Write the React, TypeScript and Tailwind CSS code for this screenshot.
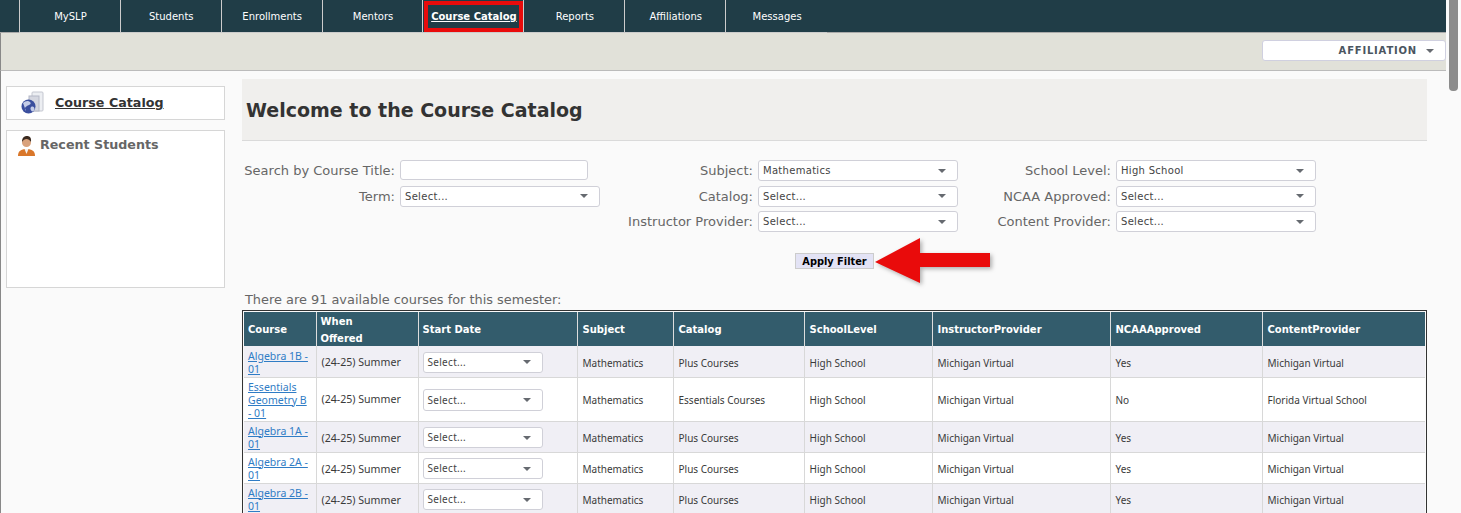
import React from 'react';

const navItems = ['MySLP', 'Students', 'Enrollments', 'Mentors', 'Course Catalog', 'Reports', 'Affiliations', 'Messages'];

const rows = [
  { course: ['Algebra 1B -', '01'], catalog: 'Plus Courses', ncaa: 'Yes', content: 'Michigan Virtual', tall: false, even: false },
  { course: ['Essentials', 'Geometry B', '- 01'], catalog: 'Essentials Courses', ncaa: 'No', content: 'Florida Virtual School', tall: true, even: true },
  { course: ['Algebra 1A -', '01'], catalog: 'Plus Courses', ncaa: 'Yes', content: 'Michigan Virtual', tall: false, even: false },
  { course: ['Algebra 2A -', '01'], catalog: 'Plus Courses', ncaa: 'Yes', content: 'Michigan Virtual', tall: false, even: true },
  { course: ['Algebra 2B -', '01'], catalog: 'Plus Courses', ncaa: 'Yes', content: 'Michigan Virtual', tall: false, even: false },
];

const Caret = () => (
  <svg width="8" height="4" viewBox="0 0 8 4" className="shrink-0">
    <path d="M0 0h8L4 4z" fill="#666a70" />
  </svg>
);

const Select = ({ value = 'Select...', className = 'w-[200px] h-[21px]' }: { value?: string; className?: string }) => (
  <div className={`flex items-center justify-between bg-white border border-[#d0d0d8] rounded-[3px] pl-1 pr-[11px] text-[10px] tracking-[0.3px] text-[#444] ${className}`}>
    <span>{value}</span>
    <Caret />
  </div>
);

const Label = ({ text }: { text: string }) => (
  <label className="text-right text-[13px] leading-[21px] text-[#666] whitespace-nowrap">{text}</label>
);

const GlobeIcon = () => (
  <svg width="24" height="26" viewBox="0 0 24 26" className="shrink-0">
    <rect x="11" y="2" width="11" height="19" rx="1" fill="#eceef2" stroke="#c4c7d0" strokeWidth="1" />
    <rect x="8" y="6" width="10" height="15" fill="#d5d7e0" stroke="#b4b8c6" strokeWidth="1" />
    <circle cx="7.500" cy="16.500" r="7" fill="#3b4f9e" />
    <path d="M2 13c2-2 5-3 7-1s-1 3-3 4-3 3-1 5M10 17c2-1 3.500 0 3.500 2s-2 3-3 2-1.500-3-.5-4z" fill="#c5cde8" />
  </svg>
);

const PersonIcon = () => (
  <svg width="17" height="20" viewBox="0 0 17 20" className="shrink-0">
    <path d="M0 20c0-5 3-7 8.500-7S17 15 17 20z" fill="#d9772a" />
    <path d="M6.500 13h4l-2 5z" fill="#f3f3f3" />
    <circle cx="8.500" cy="6.500" r="4.500" fill="#d9a27c" />
    <path d="M4 6c0-4 2-6 5-6s4.500 2 4 6c-1-2-3-3-4.500-3S5 4 4 6z" fill="#3a2a20" />
  </svg>
);

export default function App() {
  return (
    <div className="flex h-[513px] w-[1461px] overflow-hidden bg-[#fafafa] font-['DejaVu_Sans',sans-serif]">
      <div className="w-[1446px] shrink-0">
        {/* top nav */}
        <nav className="h-[33px] bg-[#203d47] border-b border-[#aaa] pl-[19px]">
          <ul className="flex w-[808px] h-[33px] border-b border-[#ccc] border-l border-l-[#ccc]">
            {navItems.map((item, i) => {
              const active = item === 'Course Catalog';
              const last = i === navItems.length - 1;
              return (
                <li key={item} className={`w-[101px] flex items-center justify-center pl-px text-[10px] text-white ${last ? '' : 'border-r border-[#ccc]'}`}>
                  {active ? (
                    <div className="w-[99px] h-[31px] mt-px border-[4px] border-[#e90b0b] flex items-center justify-center font-bold underline">{item}</div>
                  ) : (
                    item
                  )}
                </li>
              );
            })}
          </ul>
        </nav>

        {/* affiliation bar */}
        <div className="h-[38px] bg-[#e1e1d9] border-b border-[#bbb] border-l border-l-[#888] flex justify-end pt-[7px]">
          <div className="flex items-center justify-end gap-[9px] w-[184px] h-[21px] bg-white border border-[#d0d0e0] rounded-[3px] pr-[11px] text-[10px] font-bold tracking-[0.8px] text-[#4a5560]">
            AFFILIATION
            <Caret />
          </div>
        </div>

        <div className="flex border-l border-[#888]">
          {/* sidebar */}
          <aside className="w-[241px] shrink-0 pl-[5px] pt-[15px]">
            <div className="w-[219px] h-[34px] bg-white border border-[#d6d6d6] flex items-center gap-[10px] pl-[14px]">
              <GlobeIcon />
              <a className="text-[12.7px] font-bold underline text-[#333]">Course Catalog</a>
            </div>
            <div className="mt-[10px] w-[219px] h-[158px] bg-white border border-[#d6d6d6] flex items-start gap-[5px] pl-[11px] pt-[5px]">
              <PersonIcon />
              <span className="text-[12.7px] leading-[17px] font-bold text-[#666]">Recent Students</span>
            </div>
          </aside>

          {/* main */}
          <main className="w-[1185px] pt-[8px]">
            <div className="h-[62px] bg-[#f0efed] border-b border-[#dadada] flex items-center pl-[4px] pt-[2px]">
              <h1 className="text-[19px] font-bold text-[#333]">Welcome to the Course Catalog</h1>
            </div>

            <div className="mt-[19px] grid grid-cols-[153px_200px_148px_200px_148px_200px] gap-x-[5px] gap-y-[4.5px]">
              <Label text="Search by Course Title:" />
              <input className="w-[188px] h-[20px] bg-white border border-[#d0d0d8] rounded-[3px]" />
              <Label text="Subject:" />
              <Select value="Mathematics" />
              <Label text="School Level:" />
              <Select value="High School" />

              <Label text="Term:" />
              <Select />
              <Label text="Catalog:" />
              <Select />
              <Label text="NCAA Approved:" />
              <Select />

              <span />
              <span />
              <Label text="Instructor Provider:" />
              <Select />
              <Label text="Content Provider:" />
              <Select />
            </div>

            <div className="relative mt-[21px] ml-[553px] w-[79px] h-[16px]">
              <button className="block w-full h-full pt-px bg-[#e3e3f5] border border-[#ccc] text-[9.8px] font-bold text-black">Apply Filter</button>
              {/* red arrow */}
              <svg width="124" height="52" viewBox="0 0 124 52" className="absolute left-[78px] top-[-16px] drop-shadow-[2px_2px_2px_rgba(0,0,0,0.3)]">
                <path d="M2 25 47 1v15h70v14H47v16z" fill="#e90b0b" />
              </svg>
            </div>

            <p className="mt-[23px] ml-[3px] text-[12.9px] leading-[15px] text-[#666]">There are 91 available courses for this semester:</p>

            {/* course table */}
            <div className="mt-[3px] w-[1185px] border border-[#333] p-px">
              <table className="table-fixed border-collapse w-[1181px] text-[10px] text-[#3a3a3a] font-['Noto_Sans',sans-serif]">
                <colgroup>
                  <col className="w-[72px]" />
                  <col className="w-[102px]" />
                  <col className="w-[159px]" />
                  <col className="w-[96px]" />
                  <col className="w-[131px]" />
                  <col className="w-[128px]" />
                  <col className="w-[178px]" />
                  <col className="w-[152px]" />
                  <col className="w-[163px]" />
                </colgroup>
                <thead>
                  <tr className="h-[34px] bg-[#335c6c] text-white text-left text-[10px] font-bold font-['DejaVu_Sans',sans-serif]">
                    <th className="border-r border-[#ddd] pl-[4px]">Course</th>
                    <th className="border-r border-[#ddd] pl-[4px] leading-[17px] font-bold">
                      <div className="translate-y-px">When<br />Offered</div>
                    </th>
                    <th className="border-r border-[#ddd] pl-[4px]">Start Date</th>
                    <th className="border-r border-[#ddd] pl-[5px]">Subject</th>
                    <th className="border-r border-[#ddd] pl-[5px]">Catalog</th>
                    <th className="border-r border-[#ddd] pl-[5px]">SchoolLevel</th>
                    <th className="border-r border-[#ddd] pl-[5px]">InstructorProvider</th>
                    <th className="border-r border-[#ddd] pl-[5px]">NCAAApproved</th>
                    <th className="pl-[5px]">ContentProvider</th>
                  </tr>
                </thead>
                <tbody>
                  {rows.map((row, i) => {
                    const pad = row.tall ? 'pt-[2px]' : 'pt-[4px]';
                    return (
                      <tr key={row.course.join(' ')} className={`${row.tall ? 'h-[44px]' : 'h-[31px]'} border-b border-[#d8d8d8] ${row.even ? 'bg-white' : 'bg-[#f0eff5]'}`}>
                        <td className={`border-r border-[#d8d8d8] pl-[4px] ${i === 0 ? 'pt-[4px]' : 'pt-[2px]'} text-[10.500px] leading-[13px] text-[#2f7cc5] underline`}>
                          {row.course.map((line) => (
                            <div key={line}>{line}</div>
                          ))}
                        </td>
                        <td className={`border-r border-[#d8d8d8] pl-[5px] ${pad} text-[10.600px]`}>(24-25) Summer</td>
                        <td className="border-r border-[#d8d8d8] pl-[4px] pt-[2px]">
                          <Select className={`w-[120px] ${row.tall ? 'h-[22px]' : 'h-[21px]'}`} />
                        </td>
                        <td className={`border-r border-[#d8d8d8] pl-[5px] ${pad}`}>Mathematics</td>
                        <td className={`border-r border-[#d8d8d8] pl-[5px] ${pad}`}>{row.catalog}</td>
                        <td className={`border-r border-[#d8d8d8] pl-[5px] ${pad}`}>High School</td>
                        <td className={`border-r border-[#d8d8d8] pl-[5px] ${pad}`}>Michigan Virtual</td>
                        <td className={`border-r border-[#d8d8d8] pl-[5px] ${pad}`}>{row.ncaa}</td>
                        <td className={`pl-[5px] ${pad}`}>{row.content}</td>
                      </tr>
                    );
                  })}
                </tbody>
              </table>
            </div>
          </main>
        </div>
      </div>

      {/* scrollbar */}
      <div className="flex-1 bg-[#fafafa] pl-[3px]">
        <div className="w-[9px] h-[91px] bg-[#8c8c8c] rounded-b-[4px]" />
      </div>
    </div>
  );
}
